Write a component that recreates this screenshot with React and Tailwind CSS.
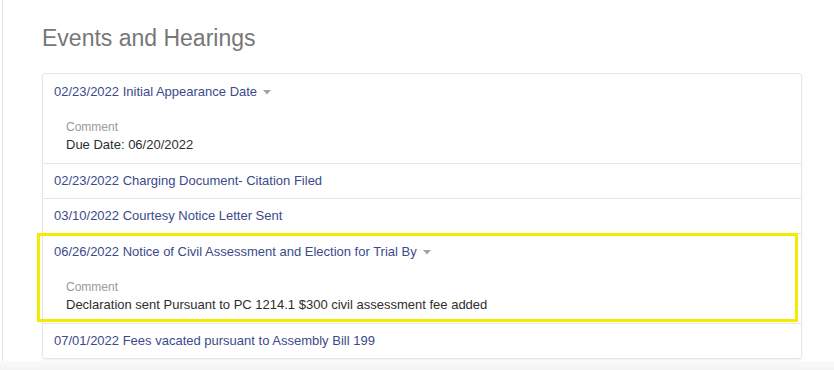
const events = [
  { label: '02/23/2022 Initial Appearance Date', caret: true, comment: 'Due Date: 06/20/2022' },
  { label: '02/23/2022 Charging Document- Citation Filed' },
  { label: '03/10/2022 Courtesy Notice Letter Sent' },
  {
    label: '06/26/2022 Notice of Civil Assessment and Election for Trial By',
    caret: true,
    comment: 'Declaration sent Pursuant to PC 1214.1 $300 civil assessment fee added',
    highlight: true,
  },
  { label: '07/01/2022 Fees vacated pursuant to Assembly Bill 199' },
];

function Caret() {
  return (
    <svg width="8" height="5" viewBox="0 0 8 5" className="ml-[6px] inline-block">
      <path d="M0 0 L8 0 L4 4.5 Z" fill="#a3a3a3" />
    </svg>
  );
}

export default function App() {
  return (
    <div className="w-[834px] h-[370px] bg-white overflow-hidden relative" style={{ fontFamily: '"Liberation Sans", Arial, sans-serif' }}>
      <div className="ml-[2px] h-[361px] border-l border-[#e4e4e4] pl-[39px]">
        <h2 className="pt-[25px] text-[23px] leading-[26px] text-[#777777]">Events and Hearings</h2>

        <div className="mt-[22px] w-[760px] border border-[#e6e6e6] rounded-[3px] bg-white shadow-[0_1px_2px_rgba(0,0,0,0.06)]">
          {events.map((ev, i) => (
            <div
              key={i}
              className={`relative px-[11px] ${i > 0 ? 'border-t border-[#e6e6e6]' : ''} ${ev.comment ? 'pt-[9px] pb-[9px]' : 'py-[8px]'}`}
            >
              {ev.highlight && (
                <div className="absolute left-[-6px] right-[3px] top-[-1px] bottom-[1px] border-[3px] border-[#f3ec00] pointer-events-none" />
              )}
              <div className="flex items-center text-[13px] leading-[18px] text-[#3c4a8c]">
                <span>{ev.label}</span>
                {ev.caret && <Caret />}
              </div>
              {ev.comment && (
                <div className="pl-[12px] mt-[17px]">
                  <div className="text-[12px] leading-[18px] text-[#9a9a9a]">Comment</div>
                  <div className="text-[13px] leading-[18px] text-[#2e2e2e]">{ev.comment}</div>
                </div>
              )}
            </div>
          ))}
        </div>
      </div>
      <div className="h-[9px] bg-gradient-to-b from-[#fafafa] to-[#f4f4f4]" />
    </div>
  );
}
